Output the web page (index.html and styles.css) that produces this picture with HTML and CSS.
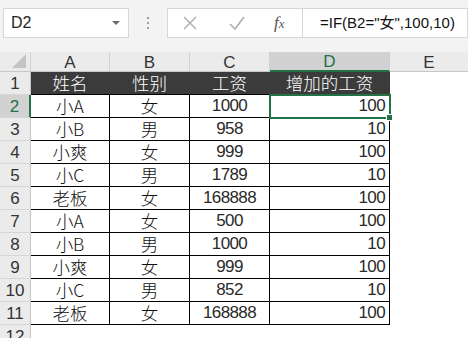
FILE: index.html
```html
<!DOCTYPE html>
<html>
<head>
<meta charset="utf-8">
<link rel="stylesheet" href="styles.css">
</head>
<body>
<div class="bar">
  <div class="namebox"><span class="nb-text">D2</span><span class="nb-arrow"></span></div>
  <div class="dots"><i></i><i></i><i></i></div>
  <div class="btns">
    <svg class="ic-x" width="16" height="16" viewBox="0 0 16 16"><path d="M2 2L14 14M14 2L2 14" stroke="#b0b0b0" stroke-width="1.5" fill="none"/></svg>
    <svg class="ic-ok" width="18" height="16" viewBox="0 0 18 16"><path d="M2 9L7 14L16 2" stroke="#b0b0b0" stroke-width="1.7" fill="none"/></svg>
    <span class="fx">f<span class="fx-x">x</span></span>
  </div>
  <div class="formula">=IF(B2="女",100,10)</div>
</div>
<div class="sheet">
  <div class="corner"><span class="tri"></span></div>
  <div class="ch">A</div><div class="ch">B</div><div class="ch">C</div><div class="ch ch-sel">D</div><div class="ch ch-last">E</div>

  <div class="rh">1</div><div class="c hd">姓名</div><div class="c hd">性别</div><div class="c hd">工资</div><div class="c hd">增加的工资</div><div class="e"></div>
  <div class="rh rh-sel">2</div><div class="c">小A</div><div class="c">女</div><div class="c n">1000</div><div class="c n r sel">100</div><div class="e"></div>
  <div class="rh">3</div><div class="c">小B</div><div class="c">男</div><div class="c n">958</div><div class="c n r">10</div><div class="e"></div>
  <div class="rh">4</div><div class="c">小爽</div><div class="c">女</div><div class="c n">999</div><div class="c n r">100</div><div class="e"></div>
  <div class="rh">5</div><div class="c">小C</div><div class="c">男</div><div class="c n">1789</div><div class="c n r">10</div><div class="e"></div>
  <div class="rh">6</div><div class="c">老板</div><div class="c">女</div><div class="c n">168888</div><div class="c n r">100</div><div class="e"></div>
  <div class="rh">7</div><div class="c">小A</div><div class="c">女</div><div class="c n">500</div><div class="c n r">100</div><div class="e"></div>
  <div class="rh">8</div><div class="c">小B</div><div class="c">男</div><div class="c n">1000</div><div class="c n r">10</div><div class="e"></div>
  <div class="rh">9</div><div class="c">小爽</div><div class="c">女</div><div class="c n">999</div><div class="c n r">100</div><div class="e"></div>
  <div class="rh">10</div><div class="c">小C</div><div class="c">男</div><div class="c n">852</div><div class="c n r">10</div><div class="e"></div>
  <div class="rh">11</div><div class="c">老板</div><div class="c">女</div><div class="c n">168888</div><div class="c n r">100</div><div class="e"></div>
  <div class="rh">12</div><div class="e"></div><div class="e"></div><div class="e"></div><div class="e"></div><div class="e"></div>
</div>
</body>
</html>
```
FILE: styles.css
```css
html, body {
  margin: 0;
  padding: 0;
  background: #ffffff;
  overflow: hidden;
  width: 468px;
  height: 338px;
}
body {
  font-family: "Noto Sans CJK SC", "Noto Sans", sans-serif;
}
.bar {
  height: 52px;
  background: #f3f3f3;
  display: flex;
  align-items: flex-start;
  padding-top: 8px;
  box-sizing: border-box;
}
.namebox {
  margin-left: 3px;
  width: 126px;
  height: 30px;
  background: #fff;
  border: 1px solid #d6d6d6;
  box-sizing: border-box;
  display: flex;
  align-items: center;
  position: relative;
}
.nb-text {
  margin-left: 7px;
  font-family: "Liberation Sans", sans-serif;
  font-size: 16px;
  color: #222;
}
.nb-arrow {
  position: absolute;
  right: 8px;
  top: 12px;
  width: 0;
  height: 0;
  border-left: 4px solid transparent;
  border-right: 4px solid transparent;
  border-top: 4px solid #6a6a6a;
}
.dots {
  width: 38px;
  height: 30px;
  display: flex;
  flex-direction: column;
  align-items: center;
  justify-content: center;
  gap: 3px;
}
.dots i {
  display: block;
  width: 2px;
  height: 2px;
  background: #a0a0a0;
}
.btns {
  width: 135px;
  height: 30px;
  background: #fff;
  border: 1px solid #d6d6d6;
  border-right: none;
  box-sizing: border-box;
  display: flex;
  align-items: center;
  position: relative;
}
.ic-x { margin-left: 14px; }
.ic-ok { margin-left: 30px; }
.fx {
  margin-left: 28px;
  font-family: "Liberation Serif", serif;
  font-style: italic;
  font-size: 17px;
  color: #555;
}
.fx-x { font-size: 13px; }
.formula {
  flex: 1;
  height: 30px;
  background: #fff;
  border: 1px solid #d6d6d6;
  box-sizing: border-box;
  padding-left: 17px;
  font-family: "Liberation Sans", "Noto Sans CJK SC", sans-serif;
  font-size: 15px;
  line-height: 28px;
  color: #111;
  white-space: nowrap;
  overflow: hidden;
}
.sheet {
  display: grid;
  grid-template-columns: 31px 79px 80px 80px 120px 1fr;
  grid-template-rows: 20px repeat(12, 23px);
}
.corner {
  background: #ebebeb;
  border-right: 1px solid #d0d0d0;
  border-bottom: 1px solid #c6c6c6;
  box-sizing: border-box;
  position: relative;
}
.tri {
  position: absolute;
  right: 4px;
  bottom: 3px;
  width: 0;
  height: 0;
  border-left: 14px solid transparent;
  border-bottom: 14px solid #c4c4c4;
}
.ch {
  background: #ebebeb;
  border-right: 1px solid #d0d0d0;
  border-bottom: 1px solid #c6c6c6;
  box-sizing: border-box;
  text-align: center;
  font-family: "Liberation Sans", sans-serif;
  font-size: 17px;
  line-height: 21px;
  color: #333;
}
.ch-sel {
  background: #d2d2d2;
  border-bottom: 2px solid #217346;
  color: #217346;
  line-height: 20px;
}
.ch-last { border-right: none; }
.rh {
  background: #ebebeb;
  border-right: 1px solid #c6c6c6;
  border-bottom: 1px solid #d6d6d6;
  box-sizing: border-box;
  text-align: center;
  font-family: "Liberation Sans", sans-serif;
  font-size: 17px;
  line-height: 23px;
  color: #333;
}
.rh-sel {
  background: #d2d2d2;
  border-right: 2px solid #217346;
  color: #217346;
}
.c {
  border-right: 1px solid #000;
  border-bottom: 1px solid #000;
  box-sizing: border-box;
  text-align: center;
  font-size: 17.5px;
  line-height: 22px;
  font-weight: 300;
  color: #111;
  white-space: nowrap;
  font-family: "Noto Sans CJK SC", sans-serif;
}
.n {
  font-family: "Liberation Sans", sans-serif;
  font-weight: 400;
  font-size: 17px;
  letter-spacing: -0.6px;
  color: #2a2a2a;
}
.hd {
  background: #3b3b3b;
  color: #ffffff;
  border-right-color: #3b3b3b;
}
.r {
  text-align: right;
  padding-right: 4px;
}
.sel {
  position: relative;
  outline: 2px solid #217346;
  outline-offset: -1px;
}
.sel::after {
  content: "";
  position: absolute;
  right: -4px;
  bottom: -4px;
  width: 5px;
  height: 5px;
  background: #217346;
  border: 1px solid #fff;
}
.e { background: #fff; }
```
